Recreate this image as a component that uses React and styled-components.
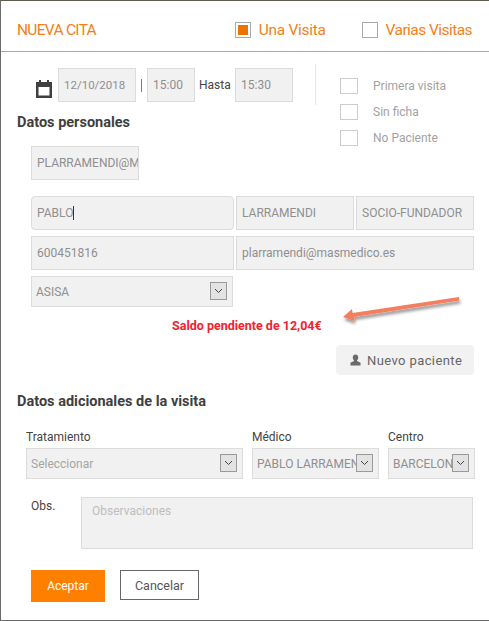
import React from 'react';
import styled, { createGlobalStyle } from 'styled-components';

const GlobalStyle = createGlobalStyle`
  html, body {
    margin: 0;
    padding: 0;
    background: #fff;
  }
  * {
    box-sizing: border-box;
  }
`;

const orange = '#f57f17';
const fieldBg = '#f1f1f1';
const fieldBorder = '#dcdcdc';

export default function App() {
  return (
    <>
      <GlobalStyle />
      <Frame>
        <Header>
          <Title>NUEVA CITA</Title>
          <VisitOption $mr={36} $spacing={-0.3}>
            <VisitBox $checked />
            Una Visita
          </VisitOption>
          <VisitOption $mr={17} $spacing={-0.55}>
            <VisitBox />
            Varias Visitas
          </VisitOption>
        </Header>

        <TopSection>
          <TopLeft>
            <DateRow>
              <CalendarIcon viewBox="0 0 16 18" aria-hidden="true">
                <path
                  fill="#404040"
                  d="M3 0h2v2h6V0h2v2h3v16H0V2h3zM2.500 7v8.500h11V7z"
                />
              </CalendarIcon>
              <Field $w={78} $size={11.5}>12/10/2018</Field>
              <TealMark />
              <Field $w={48}>15:00</Field>
              <UntilLabel>Hasta</UntilLabel>
              <Field $w={58}>15:30</Field>
            </DateRow>
            <SectionTitle>Datos personales</SectionTitle>
          </TopLeft>
          <Divider />
          <ChecksColumn>
            <CheckRow><CheckBox />Primera visita</CheckRow>
            <CheckRow><CheckBox />Sin ficha</CheckRow>
            <CheckRow><CheckBox />No Paciente</CheckRow>
          </ChecksColumn>
        </TopSection>

        <UserField $w={108}>PLARRAMENDI@M</UserField>

        <PersonalGrid>
          <Field $radius={4}>PABLO<Caret /></Field>
          <Field>LARRAMENDI</Field>
          <Field>SOCIO-FUNDADOR</Field>
        </PersonalGrid>
        <ContactGrid>
          <Field>600451816</Field>
          <Field>plarramendi@masmedico.es</Field>
        </ContactGrid>
        <InsuranceSelect>
          <SelectBox $w={202}>ASISA<SelectArrow /></SelectBox>
        </InsuranceSelect>

        <Balance>Saldo pendiente de 12,04€</Balance>
        <ArrowOverlay viewBox="0 0 130 40" aria-hidden="true">
          <defs>
            <filter id="arrowShadow" x="-10%" y="-40%" width="120%" height="200%">
              <feDropShadow dx="1" dy="3" stdDeviation="1.5" floodColor="#000" floodOpacity="0.4" />
            </filter>
          </defs>
          <path
            filter="url(#arrowShadow)"
            fill="#f47f5f"
            d="M125 7 L125.500 10.500 L20 27 L20.500 31 L9 27 L18 19 L18.500 23 Z"
          />
        </ArrowOverlay>

        <NewPatientRow>
          <NewPatientButton>
            <UserIcon viewBox="0 0 12 12" aria-hidden="true">
              <path
                fill="#6b6b6b"
                d="M6 0c1.800 0 3 1.300 3 3.200 0 1.300-.5 2.500-1.300 3.100v.9L11.500 9v3H.5V9l3.800-1.800v-.9C3.500 5.700 3 4.500 3 3.200 3 1.300 4.200 0 6 0z"
              />
            </UserIcon>
            Nuevo paciente
          </NewPatientButton>
        </NewPatientRow>

        <AdditionalTitle>Datos adicionales de la visita</AdditionalTitle>

        <VisitGrid>
          <FieldLabel>Tratamiento</FieldLabel>
          <FieldLabel>Médico</FieldLabel>
          <FieldLabel>Centro</FieldLabel>
          <SelectBox $muted>Seleccionar<SelectArrow /></SelectBox>
          <SelectBox>PABLO LARRAMEN<SelectArrow /></SelectBox>
          <SelectBox>BARCELON<SelectArrow /></SelectBox>
        </VisitGrid>

        <NotesRow>
          <NotesLabel>Obs.</NotesLabel>
          <NotesBox>Observaciones</NotesBox>
        </NotesRow>

        <Actions>
          <AcceptButton>Aceptar</AcceptButton>
          <CancelButton>Cancelar</CancelButton>
        </Actions>
      </Frame>
    </>
  );
}

const SelectArrow = () => (
  <ArrowButton>
    <svg width="9" height="6" viewBox="0 0 9 6" aria-hidden="true">
      <path d="M1 1l3.500 3.500L8 1" fill="none" stroke="#444" strokeWidth="1" />
    </svg>
  </ArrowButton>
);

const Frame = styled.div`
  position: relative;
  width: 489px;
  height: 621px;
  overflow: hidden;
  background: #fff;
  border-top: 1px solid #5f5a52;
  border-left: 1px solid #6b6b6b;
  border-bottom: 1px solid #6b6b6b;
  font-family: Roboto, 'Noto Sans', sans-serif;
  color: #444;
`;

const Header = styled.header`
  display: flex;
  align-items: center;
  height: 51px;
  padding: 8px 0 0 16px;
  border-bottom: 1px solid #f39a2c;
`;

const Title = styled.h1`
  flex: 1;
  margin: 0;
  font-size: 15.500px;
  font-weight: 400;
  letter-spacing: -0.7px;
  color: ${orange};
`;

const VisitOption = styled.label`
  display: flex;
  align-items: center;
  gap: 8px;
  margin-right: ${(p) => p.$mr}px;
  font-size: 15.500px;
  letter-spacing: ${(p) => p.$spacing}px;
  color: ${orange};
`;

const VisitBox = styled.span`
  display: flex;
  align-items: center;
  justify-content: center;
  width: 16px;
  height: 16px;
  border: 1px solid #aaa;

  &::after {
    content: '';
    display: ${(p) => (p.$checked ? 'block' : 'none')};
    width: 10px;
    height: 10px;
    background: #ee7300;
  }
`;

const TopSection = styled.section`
  display: flex;
  height: 94px;
`;

const TopLeft = styled.div`
  width: 314px;
  padding: 16px 0 0 16px;
`;

const DateRow = styled.div`
  display: flex;
  align-items: center;
  padding-left: 19px;
`;

const CalendarIcon = styled.svg`
  width: 16px;
  height: 18px;
  margin: 8px 6px 0 0;
`;

const Field = styled.div`
  display: flex;
  align-items: center;
  width: ${(p) => (p.$w ? `${p.$w}px` : 'auto')};
  height: 34px;
  padding-left: 5px;
  overflow: hidden;
  white-space: nowrap;
  background: ${fieldBg};
  border: 1px solid ${fieldBorder};
  border-radius: ${(p) => p.$radius || 0}px;
  font-size: ${(p) => p.$size || 12}px;
  color: #8f8f8f;
`;

const TealMark = styled.span`
  width: 1px;
  height: 13px;
  margin: 0 5px;
  background: #2f9e8f;
`;

const UntilLabel = styled.span`
  width: 40px;
  padding-left: 4px;
  font-size: 12px;
  color: #444;
`;

const SectionTitle = styled.h2`
  margin: 11px 0 0;
  font-size: 14.500px;
  line-height: 20px;
  font-weight: 700;
  color: #3f3f3f;
`;

const Divider = styled.div`
  width: 1px;
  height: 41px;
  margin-top: 12px;
  background: #e6e6e6;
`;

const ChecksColumn = styled.div`
  display: flex;
  flex-direction: column;
  gap: 10px;
  padding: 26px 0 0 24px;
`;

const CheckRow = styled.label`
  display: flex;
  align-items: center;
  gap: 15px;
  height: 16px;
  font-size: 12px;
  color: #a2a2a2;
`;

const CheckBox = styled.span`
  width: 18px;
  height: 16px;
  border: 1px solid #ccc;
`;

const UserField = styled(Field)`
  margin-left: 30px;
`;

const PersonalGrid = styled.div`
  display: grid;
  grid-template-columns: 203px 118px 118px;
  gap: 2px;
  margin: 16px 0 0 30px;
`;

const ContactGrid = styled.div`
  display: grid;
  grid-template-columns: 203px 238px;
  gap: 2px;
  margin: 6px 0 0 30px;
`;

const Caret = styled.span`
  width: 1px;
  height: 14px;
  background: #333;
`;

const InsuranceSelect = styled.div`
  margin: 6px 0 0 30px;
`;

const SelectBox = styled.div`
  position: relative;
  display: flex;
  align-items: center;
  width: ${(p) => (p.$w ? `${p.$w}px` : 'auto')};
  height: 31px;
  padding-left: 4px;
  overflow: hidden;
  white-space: nowrap;
  background: ${fieldBg};
  border: 1px solid ${fieldBorder};
  font-size: 12px;
  color: ${(p) => (p.$muted ? '#a5a5a5' : '#8f8f8f')};
`;

const ArrowButton = styled.span`
  position: absolute;
  top: 5px;
  right: 5px;
  display: flex;
  align-items: center;
  justify-content: center;
  width: 17px;
  height: 18px;
  background: #e3e3e3;
  border: 1px solid #9a9a9a;
`;

const Balance = styled.p`
  margin: 11px 0 0 171px;
  font-size: 12.500px;
  line-height: 16px;
  font-weight: 700;
  color: #f5222d;
`;

const ArrowOverlay = styled.svg`
  position: absolute;
  top: 289px;
  left: 333px;
  width: 130px;
  height: 40px;
`;

const NewPatientRow = styled.div`
  display: flex;
  justify-content: flex-end;
  margin: 11px 15px 0 0;
`;

const NewPatientButton = styled.button`
  display: flex;
  align-items: center;
  gap: 6px;
  width: 138px;
  height: 30px;
  padding: 0 0 0 14px;
  background: #f2f2f2;
  border: 0;
  border-radius: 4px;
  font-family: inherit;
  font-size: 13px;
  letter-spacing: 0.4px;
  color: #666;
`;

const UserIcon = styled.svg`
  width: 11px;
  height: 12px;
`;

const AdditionalTitle = styled(SectionTitle)`
  margin: 17px 0 0 16px;
`;

const VisitGrid = styled.div`
  display: grid;
  grid-template-columns: 217px 127px 87px;
  column-gap: 9px;
  row-gap: 2px;
  margin: 16px 0 0 25px;
`;

const FieldLabel = styled.label`
  font-size: 12px;
  line-height: 18px;
  color: #444;
`;

const NotesRow = styled.div`
  display: flex;
  margin: 18px 0 0 30px;
`;

const NotesLabel = styled.label`
  width: 50px;
  padding-top: 1px;
  font-size: 12px;
  line-height: 16px;
  color: #444;
`;

const NotesBox = styled.div`
  width: 392px;
  height: 52px;
  padding: 6px 10px;
  background: ${fieldBg};
  border: 1px solid ${fieldBorder};
  font-size: 12px;
  color: #bdbdbd;
`;

const Actions = styled.div`
  display: flex;
  align-items: flex-start;
  gap: 15px;
  margin: 21px 0 0 30px;
`;

const AcceptButton = styled.button`
  width: 74px;
  height: 32px;
  background: #ff8000;
  border: 0;
  font-family: inherit;
  font-size: 12px;
  color: #fff;
`;

const CancelButton = styled.button`
  width: 79px;
  height: 30px;
  background: #fff;
  border: 1px solid #666;
  font-family: inherit;
  font-size: 12.500px;
  color: #555;
`;
